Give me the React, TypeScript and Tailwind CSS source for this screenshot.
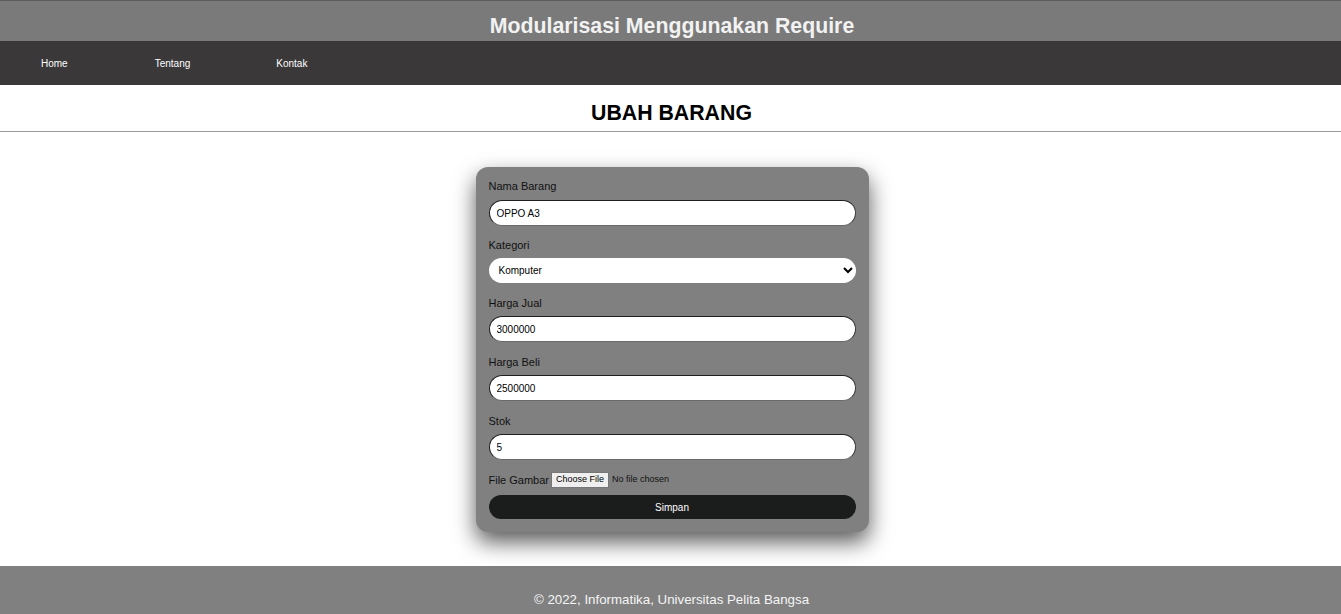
import React from "react";

const priceFields = [
  { label: "Harga Jual", value: "3000000" },
  { label: "Harga Beli", value: "2500000" },
  { label: "Stok", value: "5" },
];

const labelCls = "block text-[11px] leading-[14px] text-[#111]";

const inputCls =
  "block w-full h-[26px] rounded-full bg-white px-[7px] text-[10px] text-black border border-t-[#1e1e1e] border-l-[#1e1e1e] border-r-[#3a3a3a] border-b-[#6a6a6a] outline-none";

export default function App() {
  return (
    <div className="min-h-screen bg-white font-['Liberation_Sans',Arial,sans-serif]">
      {/* Header */}
      <header className="h-[41px] bg-[#7a7a7a] border-t border-[#5c5c5c] flex items-center justify-center pt-[11px]">
        <h1 className="text-[21.3px] font-bold text-[#f2f2f2] leading-none ml-[3px]">Modularisasi Menggunakan Require</h1>
      </header>

      {/* Nav */}
      <nav className="h-[44px] bg-[#3a3839] flex items-center">
        <a className="ml-[41px] text-[10px] text-white">Home</a>
        <a className="ml-[87px] text-[10px] text-white">Tentang</a>
        <a className="ml-[86px] text-[10px] text-white">Kontak</a>
      </nav>

      {/* Page title */}
      <div className="h-[47px] border-b border-[#9a9a9a] flex items-center justify-center pt-[12px]">
        <h2 className="text-[21.3px] font-bold text-black leading-none ml-[2px]">UBAH BARANG</h2>
      </div>

      {/* Form */}
      <div className="pt-[35px] pb-[34px] flex justify-center">
        <form className="w-[393px] ml-[3px] rounded-[12px] bg-[#808080] px-[13px] pt-[12px] pb-[13px] shadow-[0_10px_22px_rgba(0,0,0,0.65)]">
          <div className="mb-[12px]">
            <label className={`${labelCls} mb-[7px]`}>Nama Barang</label>
            <input className={inputCls} defaultValue="OPPO A3" />
          </div>

          <div className="mb-[13px]">
            <label className={`${labelCls} mb-[6px]`}>Kategori</label>
            <select className="block w-full h-[25px] rounded-full bg-white px-[6px] text-[10px] text-black outline-none" defaultValue="Komputer">
              <option>Komputer</option>
              <option>Handphone</option>
            </select>
          </div>

          {priceFields.map((f, i) => (
            <div key={f.label} className={i < 2 ? "mb-[13px]" : ""}>
              <label className={`${labelCls} mb-[6px]`}>{f.label}</label>
              <input className={inputCls} defaultValue={f.value} />
            </div>
          ))}

          <div className="flex items-center h-[18px] mt-[11px] mb-[6px]">
            <span className="text-[11px] text-[#111] mr-[2px]">File Gambar</span>
            <input type="file" className="text-[9px] text-[#111] file:mr-[3px] file:px-[4px] file:py-0 file:bg-[#efefef] file:border file:border-[#767676] file:text-[9px] file:text-black" />
          </div>

          <button type="button" className="block w-full h-[24px] rounded-full bg-[#1b1c1c] text-[10px] text-white">
            Simpan
          </button>
        </form>
      </div>

      {/* Footer */}
      <footer className="h-[48px] bg-[#808080] flex items-end justify-center pb-[8px]">
        <p className="text-[13.3px] leading-none text-[#f5f5f5] ml-[2px]">© 2022, Informatika, Universitas Pelita Bangsa</p>
      </footer>
    </div>
  );
}
